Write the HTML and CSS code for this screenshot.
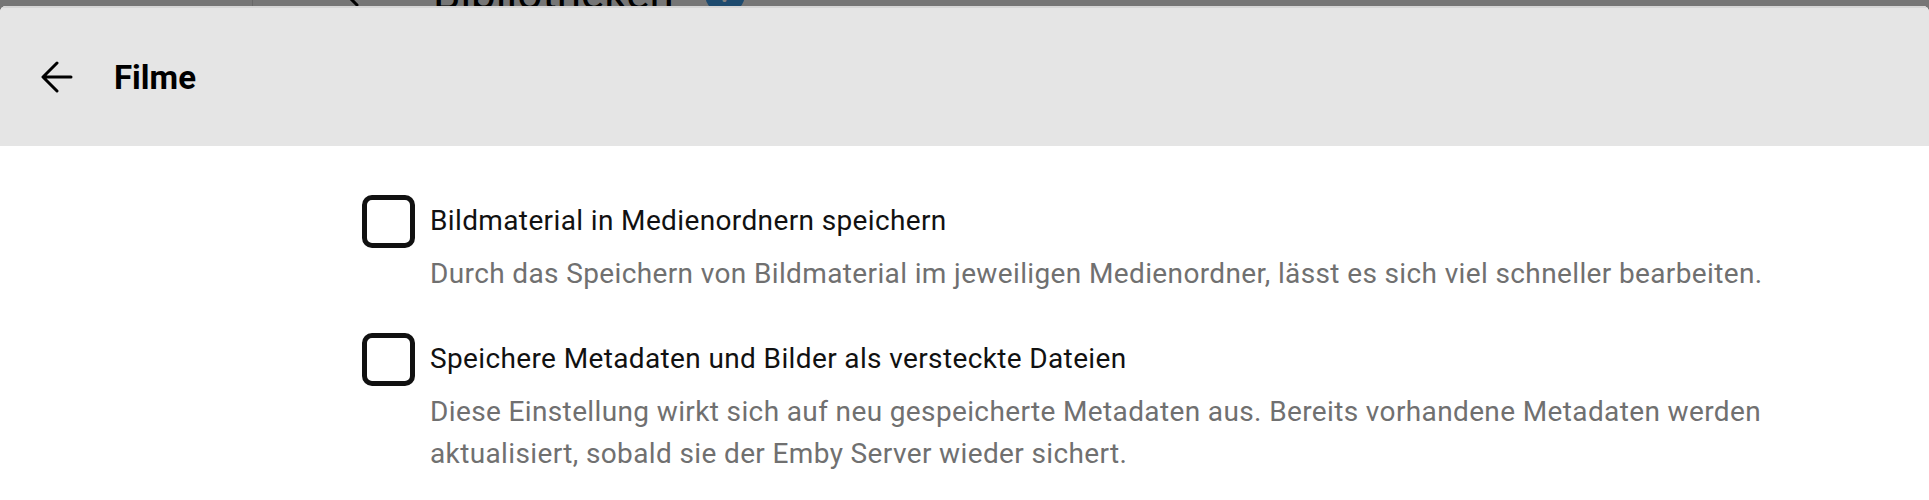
FILE: index.html
```html
<!DOCTYPE html>
<html lang="de">
<head>
<meta charset="utf-8">
<title>Filme</title>
<link rel="stylesheet" href="styles.css">
</head>
<body>
<div class="page">
  <div class="page-header">
    <div class="sidebar-edge"></div>
    <svg class="page-back" viewBox="0 0 32 32" width="32" height="32"><path d="M20 5 L9 16 L20 27" fill="none" stroke="#000" stroke-width="3" stroke-linecap="round" stroke-linejoin="round"/></svg>
    <h1 class="page-title">Bibliotheken</h1>
    <span class="help-badge">?</span>
  </div>
</div>
<div class="dim"></div>
<div class="dialog">
  <div class="dialog-header">
    <button class="back-btn" aria-label="Zurück">
      <svg viewBox="0 0 32 32" width="32" height="32"><path d="M30 16 H2.5 M16 2 L2 16 L16 30" fill="none" stroke="#000" stroke-width="3" stroke-linecap="round" stroke-linejoin="round"/></svg>
    </button>
    <h2 class="dialog-title">Filme</h2>
  </div>
  <div class="dialog-content">
    <label class="field">
      <span class="checkbox"></span>
      <span class="field-label">Bildmaterial in Medienordnern speichern</span>
      <span class="field-desc">Durch das Speichern von Bildmaterial im jeweiligen Medienordner, lässt es sich viel schneller bearbeiten.</span>
    </label>
    <label class="field">
      <span class="checkbox"></span>
      <span class="field-label">Speichere Metadaten und Bilder als versteckte Dateien</span>
      <span class="field-desc">Diese Einstellung wirkt sich auf neu gespeicherte Metadaten aus. Bereits vorhandene Metadaten werden aktualisiert, sobald sie der Emby Server wieder sichert.</span>
    </label>
  </div>
</div>
</body>
</html>
```
FILE: styles.css
```css
* { box-sizing: border-box; }
html, body {
  margin: 0;
  padding: 0;
  height: 100%;
  overflow: hidden;
}
body {
  background: #ececec;
  font-family: Roboto, "Liberation Sans", Arial, sans-serif;
  color: #111;
}
.page {
  height: 100%;
}
.page-header {
  display: flex;
  align-items: center;
  height: 60px;
  margin-top: -36px;
}
.sidebar-edge {
  width: 253px;
  height: 100%;
  border-right: 1px solid #d0d0d0;
  flex: none;
}
.page-back {
  margin-left: 84px;
  flex: none;
}
.page-title {
  margin: 0 0 0 64px;
  font-size: 44px;
  font-weight: 400;
  color: #000;
  line-height: 1;
  white-space: nowrap;
}
.help-badge {
  margin-left: 31px;
  width: 40px;
  height: 40px;
  flex: none;
  border-radius: 50%;
  background: #3d97de;
  color: #fff;
  display: flex;
  align-items: center;
  justify-content: center;
  font-size: 24px;
  font-weight: 700;
}
.dim {
  position: fixed;
  inset: 0;
  background: rgba(0, 0, 0, 0.5);
}
.dialog {
  position: fixed;
  top: 6px;
  left: 0;
  right: 0;
  bottom: 0;
  background: #fff;
  border-radius: 6px 6px 0 0;
  overflow: hidden;
}
.dialog-header {
  height: 140px;
  background: #e5e5e5;
  border-top: 2px solid #d6d6d6;
  display: flex;
  align-items: center;
}
.back-btn {
  margin-left: 41px;
  padding: 0;
  border: 0;
  background: none;
  width: 32px;
  height: 32px;
  display: flex;
}
.dialog-title {
  margin: 0 0 0 41px;
  font-size: 33px;
  font-weight: 700;
  color: #000;
  line-height: 1;
}
.dialog-content {
  padding: 49px 80px 0 362px;
  display: flex;
  flex-direction: column;
  gap: 38px;
}
.field {
  display: grid;
  grid-template-columns: 53px 1fr;
  column-gap: 15px;
  max-width: 1500px;
}
.checkbox {
  grid-column: 1;
  grid-row: 1;
  width: 53px;
  height: 53px;
  border: 5px solid #111;
  border-radius: 10px;
}
.field-label {
  grid-column: 2;
  grid-row: 1;
  align-self: start;
  font-size: 28px;
  letter-spacing: 0.37px;
  line-height: 51px;
  color: #111;
}
.field-desc {
  grid-column: 2;
  grid-row: 2;
  margin-top: 5px;
  font-size: 28px;
  letter-spacing: 0.37px;
  line-height: 42px;
  color: #707070;
}
```
